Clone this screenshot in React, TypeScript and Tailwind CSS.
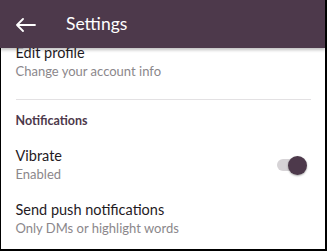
import React from "react";

const Toggle = () => (
  <div className="relative w-[30px] h-[20px] flex items-center">
    <div className="w-[24px] h-[12px] rounded-full bg-[#d6d3d6]" />
    <div className="absolute right-0 top-[1px] w-[19px] h-[19px] rounded-full bg-[#4d394b] shadow-[0_1px_2px_rgba(0,0,0,0.35)]" />
  </div>
);

const Row = ({ title, sub, right }: { title: string; sub: string; right?: React.ReactNode }) => (
  <div className="flex items-center justify-between pr-[18px]">
    <div className="flex flex-col">
      <p className="text-[14.5px] leading-[18px] text-[#1f1b1f]">{title}</p>
      <p className="text-[13px] leading-[18px] text-[#8b878b]">{sub}</p>
    </div>
    {right}
  </div>
);

export default function App() {
  return (
    <div
      className="w-[327px] h-[251px] overflow-hidden bg-white border-r-2 border-b-2 border-black"
      style={{ fontFamily: "Lato, 'Noto Sans', sans-serif" }}
    >
      <header className="relative z-10 h-12 bg-[#4d394b] flex items-center shadow-[0_2px_3px_rgba(0,0,0,0.25)]">
        <svg width="20" height="14" viewBox="0 0 20 14" className="ml-[16px] mt-[2px]" fill="none" stroke="white" strokeWidth="1.8" strokeLinecap="round" strokeLinejoin="round">
          <path d="M19 7H1M7 1L1 7l6 6" />
        </svg>
        <h1 className="ml-[30px] text-[17.5px] text-white">Settings</h1>
      </header>

      <main className="-mt-[4px] border-l-[1.5px] border-black h-[210px] pl-[14.5px]">
        <Row title="Edit profile" sub="Change your account info" />

        <div className="mt-[19px] mr-[14px] border-t border-[#e3e1e3]" />

        <p className="mt-[13px] text-[12.5px] font-bold leading-[16px] text-[#4d394b]">Notifications</p>

        <div className="mt-[18px]">
          <Row title="Vibrate" sub="Enabled" right={<Toggle />} />
        </div>

        <div className="mt-[18px]">
          <Row title="Send push notifications" sub="Only DMs or highlight words" />
        </div>
      </main>
    </div>
  );
}
